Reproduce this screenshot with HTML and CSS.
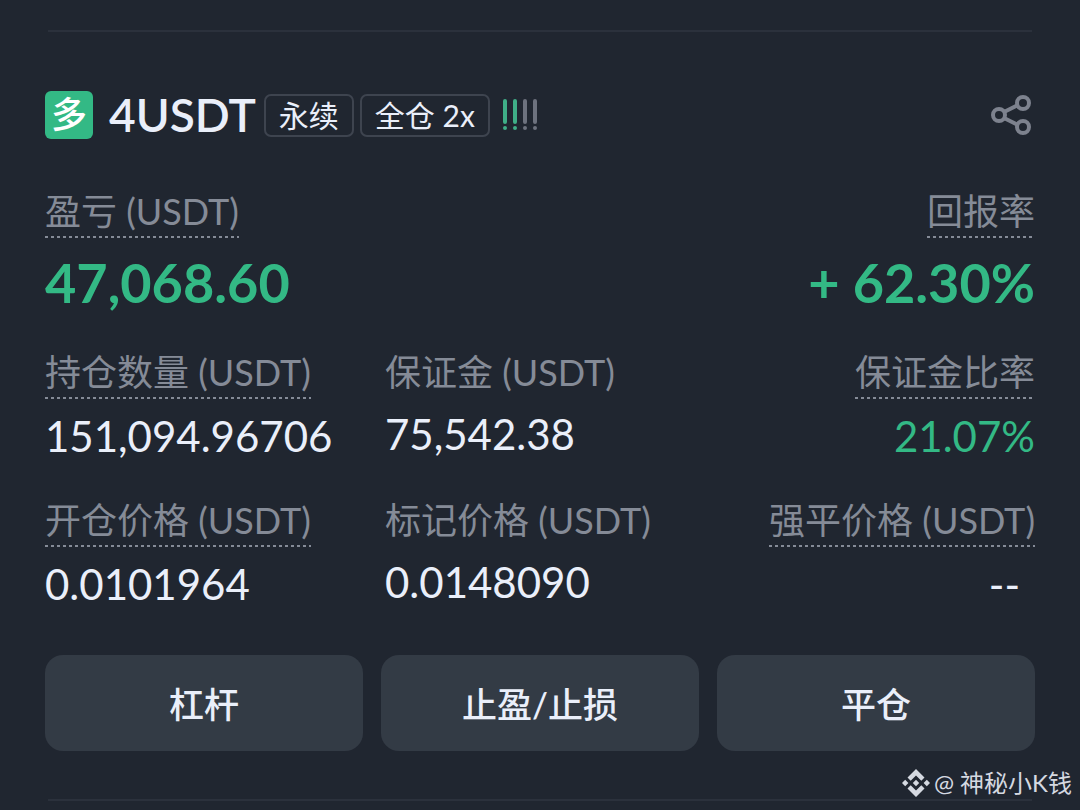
FILE: index.html
```
<!DOCTYPE html>
<html lang="zh-CN">
<head>
    <meta charset="UTF-8">
    <meta name="viewport" content="width=device-width, initial-scale=1.0">
    <title>4USDT 永续</title>
    <link rel="stylesheet" href="styles.css">
</head>
<body>

    <main class="position">
        <header class="header">
            <span class="side">多</span>
            <h1 class="symbol">4USDT</h1>
            <span class="tag">永续</span>
            <span class="tag">全仓 2x</span>
            <svg class="risk" width="38" height="32" viewBox="0 0 38 32" fill="none" stroke-width="4" stroke-linecap="round" aria-hidden="true">
                <path d="M3 2v21M3 29v.1M13 2v21M13 29v.1" stroke="#3fae87"/>
                <path d="M23 2v21M23 29v.1M33 2v21M33 29v.1" stroke="#6d727e"/>
            </svg>
            <button type="button" class="share" aria-label="分享">
                <svg width="42" height="42" viewBox="0 0 42 42" fill="none" stroke="#7d828e" stroke-width="4">
                    <circle cx="8" cy="21" r="6"/>
                    <circle cx="32" cy="9" r="6"/>
                    <circle cx="32" cy="33" r="6"/>
                    <path d="M13 18l14-7M13 24l14 7"/>
                </svg>
            </button>
        </header>

        <dl class="summary">
            <div class="item">
                <dt class="label hint">盈亏 (USDT)</dt>
                <dd class="value big up">47,068.60</dd>
            </div>
            <div class="item right">
                <dt class="label hint">回报率</dt>
                <dd class="value big up">+ 62.30%</dd>
            </div>
        </dl>

        <dl class="details">
            <div class="item">
                <dt class="label hint">持仓数量 (USDT)</dt>
                <dd class="value">151,094.96706</dd>
            </div>
            <div class="item">
                <dt class="label">保证金 (USDT)</dt>
                <dd class="value">75,542.38</dd>
            </div>
            <div class="item right">
                <dt class="label hint">保证金比率</dt>
                <dd class="value up">21.07%</dd>
            </div>
            <div class="item">
                <dt class="label hint">开仓价格 (USDT)</dt>
                <dd class="value">0.0101964</dd>
            </div>
            <div class="item">
                <dt class="label">标记价格 (USDT)</dt>
                <dd class="value">0.0148090</dd>
            </div>
            <div class="item right">
                <dt class="label hint">强平价格 (USDT)</dt>
                <dd class="value empty">--</dd>
            </div>
        </dl>

        <div class="actions">
            <button type="button" class="action">杠杆</button>
            <button type="button" class="action">止盈/止损</button>
            <button type="button" class="action">平仓</button>
        </div>
    </main>

    <div class="watermark">
        <svg width="28" height="28" viewBox="0 0 28 28" fill="currentColor" aria-hidden="true">
            <path d="M14 0l8.500 8.500-3.200 3.200L14 6.400l-5.300 5.300-3.200-3.200z"/>
            <path d="M14 28l8.500-8.500-3.200-3.200-5.300 5.300-5.300-5.300-3.200 3.200z"/>
            <path d="M14 10.800l3.200 3.200-3.200 3.200-3.200-3.200zM3.200 10.800L6.400 14l-3.200 3.200L0 14zM24.800 10.800L28 14l-3.200 3.200-3.200-3.200z"/>
        </svg>
        <span>@ 神秘小K钱</span>
    </div>

</body>
</html>
```
FILE: styles.css
```
* {
    box-sizing: border-box;
}

body {
    margin: 0;
    padding: 30px 45px 8px;
    background-color: #202630;
    color: #eaeffa;
    font-family: Lato, "Noto Sans CJK SC", sans-serif;
}

.position::before,
.position::after {
    content: "";
    display: block;
    height: 2px;
    margin: 0 3px;
    background-color: #2b313c;
}

.header {
    display: flex;
    align-items: center;
    height: 48px;
    margin: 59px 0 49px;
}

.side {
    width: 48px;
    height: 48px;
    border-radius: 6px;
    background-color: #33b985;
    color: #fff;
    font-size: 36px;
    font-weight: 500;
    line-height: 46px;
    text-align: center;
}

.symbol {
    margin: 0 8px 0 16px;
    font-size: 46px;
    font-weight: 600;
    line-height: 50px;
}

.tag {
    height: 43px;
    margin-right: 6px;
    padding: 0 13px;
    border: 2px solid #3e444f;
    border-radius: 7px;
    font-size: 30px;
    line-height: 38px;
    white-space: nowrap;
}

.risk {
    margin-left: 6px;
}

.share {
    display: flex;
    margin-left: auto;
    padding: 0 2px;
    border: 0;
    background: none;
    cursor: pointer;
}

.summary,
.details {
    display: grid;
    margin: 0;
}

.summary {
    grid-template-columns: 1fr 1fr;
    margin-bottom: 36px;
}

.details {
    grid-template-columns: 34fr 32fr 33fr;
    row-gap: 36px;
}

.item {
    display: flex;
    flex-direction: column;
    align-items: flex-start;
}

.right {
    align-items: flex-end;
}

.label {
    padding-bottom: 2px;
    color: #858b97;
    font-size: 36px;
    font-weight: 400;
    line-height: 46px;
    white-space: nowrap;
}

.hint {
    padding-bottom: 4px;
    background: repeating-linear-gradient(90deg, #858b97 0 3px, transparent 3px 6px) left bottom / 100% 2px no-repeat;
}

.value {
    margin: 12px 0 0;
    font-size: 42px;
    line-height: 50px;
}

.big {
    margin-top: 15px;
    font-size: 54px;
    font-weight: 700;
    line-height: 60px;
}

.up {
    color: #33b985;
}

.empty {
    padding-right: 15px;
}

.actions {
    display: grid;
    grid-template-columns: repeat(3, 1fr);
    gap: 18px;
    margin: 46px 0 48px;
}

.action {
    height: 96px;
    padding: 0 0 2px;
    border: 0;
    border-radius: 18px;
    background-color: #333b45;
    color: inherit;
    font-family: inherit;
    font-size: 35px;
    font-weight: 500;
    cursor: pointer;
}

.watermark {
    position: absolute;
    right: 8px;
    bottom: 9px;
    display: flex;
    align-items: center;
    gap: 4px;
    color: #d5d9e1;
    font-size: 24px;
    line-height: 36px;
}
```
